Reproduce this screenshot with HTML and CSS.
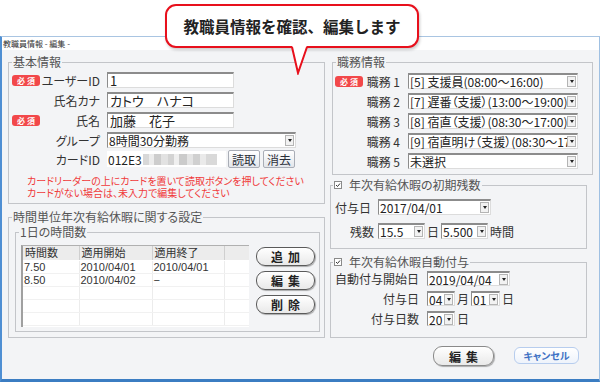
FILE: index.html
```html
<!DOCTYPE html>
<html lang="ja">
<head>
    <meta charset="UTF-8">
    <meta name="viewport" content="width=device-width, initial-scale=1.0">
    <title>教職員情報 - 編集 -</title>
    <link rel="stylesheet" href="styles.css">
</head>
<body>
    <!-- help balloon over the window -->
    <div class="callout">教職員情報を確認、編集します</div>
    <svg class="callout-tail" width="22" height="30" viewBox="0 0 22 30">
        <polygon points="3,0 18,0 9,28" fill="#fff"/>
        <polyline points="3,2 9,28 18,2" fill="none" stroke="#e8101c" stroke-width="2"/>
    </svg>

    <div class="top-space"></div>

    <div class="window">
        <div class="titlebar">教職員情報 - 編集 -</div>

        <div class="content">
            <div class="col-left">
                <fieldset class="group basic">
                    <legend>基本情報</legend>
                    <div class="row">
                        <span class="label"><span class="badge">必 須</span>ユーザーID</span>
                        <div class="textbox w127">1</div>
                    </div>
                    <div class="row">
                        <span class="label">氏名カナ</span>
                        <div class="textbox w127">カトウ　ハナコ</div>
                    </div>
                    <div class="row">
                        <span class="label"><span class="badge">必 須</span>氏名</span>
                        <div class="textbox w127">加藤　花子</div>
                    </div>
                    <div class="row">
                        <span class="label">グループ</span>
                        <div class="select w189"><span class="select-text">8時間30分勤務</span><span class="arrow"></span></div>
                    </div>
                    <div class="row card-row">
                        <span class="label">カードID</span>
                        <div class="card-field">012E3<span class="masked"></span></div>
                        <button class="small-btn">読取</button>
                        <button class="small-btn">消去</button>
                    </div>
                    <p class="note">カードリーダーの上にカードを置いて読取ボタンを押してください<br>カードがない場合は、未入力で編集してください</p>
                </fieldset>

                <fieldset class="group hourly">
                    <legend>時間単位年次有給休暇に関する設定</legend>
                    <fieldset class="group hours">
                        <legend>1日の時間数</legend>
                        <div class="hours-body">
                            <div class="list-box">
                                <table class="list">
                                    <colgroup>
                                        <col class="c1"><col class="c2"><col class="c3"><col>
                                    </colgroup>
                                    <thead>
                                        <tr><th>時間数</th><th>適用開始</th><th>適用終了</th><th></th></tr>
                                    </thead>
                                    <tbody>
                                        <tr><td>7.50</td><td>2010/04/01</td><td>2010/04/01</td><td></td></tr>
                                        <tr><td>8.50</td><td>2010/04/02</td><td>&minus;</td><td></td></tr>
                                        <tr><td></td><td></td><td></td><td></td></tr>
                                        <tr><td></td><td></td><td></td><td></td></tr>
                                        <tr><td></td><td></td><td></td><td></td></tr>
                                    </tbody>
                                </table>
                            </div>
                            <div class="list-buttons">
                                <button class="pill">追加</button>
                                <button class="pill">編集</button>
                                <button class="pill">削除</button>
                            </div>
                        </div>
                    </fieldset>
                </fieldset>
            </div>

            <div class="col-right">
                <fieldset class="group duty">
                    <legend>職務情報</legend>
                    <div class="duty-row">
                        <span class="label"><span class="badge">必 須</span>職務 1</span>
                        <div class="select w170"><span class="select-text">[5] 支援員(08:00～16:00)</span><span class="arrow"></span></div>
                    </div>
                    <div class="duty-row">
                        <span class="label">職務 2</span>
                        <div class="select w170"><span class="select-text">[7] 遅番（支援）(13:00～19:00)</span><span class="arrow"></span></div>
                    </div>
                    <div class="duty-row">
                        <span class="label">職務 3</span>
                        <div class="select w170"><span class="select-text">[8] 宿直（支援）(08:30～17:00)</span><span class="arrow"></span></div>
                    </div>
                    <div class="duty-row">
                        <span class="label">職務 4</span>
                        <div class="select w170"><span class="select-text">[9] 宿直明け（支援）(08:30～17</span><span class="arrow"></span></div>
                    </div>
                    <div class="duty-row">
                        <span class="label">職務 5</span>
                        <div class="select w170"><span class="select-text">未選択</span><span class="arrow"></span></div>
                    </div>
                </fieldset>

                <fieldset class="group initial">
                    <legend><span class="check"><svg width="8" height="8" viewBox="0 0 8 8"><rect x="0.5" y="0.5" width="7" height="7" fill="#fff" stroke="#8a8a8a"/><polyline points="2,4 3.5,5.5 6,2.5" fill="none" stroke="#333" stroke-width="1"/></svg></span>年次有給休暇の初期残数</legend>
                    <div class="init-row">
                        <span class="init-label">付与日</span>
                        <div class="select w113"><span class="select-text">2017/04/01</span><span class="arrow"></span></div>
                    </div>
                    <div class="init-row">
                        <span class="init-label rest">残数</span>
                        <div class="select w47"><span class="select-text">15.5</span><span class="arrow"></span></div>
                        <span class="unit">日</span>
                        <div class="select w47"><span class="select-text">5.500</span><span class="arrow"></span></div>
                        <span class="unit">時間</span>
                    </div>
                </fieldset>

                <fieldset class="group auto">
                    <legend><span class="check"><svg width="8" height="8" viewBox="0 0 8 8"><rect x="0.5" y="0.5" width="7" height="7" fill="#fff" stroke="#8a8a8a"/><polyline points="2,4 3.5,5.5 6,2.5" fill="none" stroke="#333" stroke-width="1"/></svg></span>年次有給休暇自動付与</legend>
                    <div class="auto-row">
                        <span class="auto-label">自動付与開始日</span>
                        <div class="select w83"><span class="select-text">2019/04/04</span><span class="arrow"></span></div>
                    </div>
                    <div class="auto-row">
                        <span class="auto-label">付与日</span>
                        <div class="select w28"><span class="select-text">04</span><span class="arrow"></span></div>
                        <span class="unit">月</span>
                        <div class="select w29"><span class="select-text">01</span><span class="arrow"></span></div>
                        <span class="unit">日</span>
                    </div>
                    <div class="auto-row">
                        <span class="auto-label">付与日数</span>
                        <div class="select w28"><span class="select-text">20</span><span class="arrow"></span></div>
                        <span class="unit">日</span>
                    </div>
                </fieldset>
            </div>
        </div>

        <div class="actions">
            <button class="pill save">編集</button>
            <button class="cancel">キャンセル</button>
        </div>
    </div>
</body>
</html>
```

FILE: styles.css
```css
* {
    margin: 0;
    padding: 0;
    box-sizing: border-box;
}

body {
    width: 601px;
    height: 382px;
    overflow: hidden;
    position: relative;
    background-color: #fff;
    font-family: "Noto Sans CJK JP", "Noto Sans", sans-serif;
    font-size: 12px;
    font-feature-settings: "palt";
    color: #333;
}

button {
    font-family: inherit;
    font-feature-settings: "palt";
    cursor: pointer;
}

/* balloon */
.callout {
    position: absolute;
    left: 165px;
    top: 4px;
    width: 254px;
    height: 44px;
    z-index: 2;
    display: flex;
    align-items: center;
    justify-content: center;
    background-color: #fff;
    border: 2px solid #e8101c;
    border-radius: 11px;
    box-shadow: 1px 2px 3px rgba(0, 0, 0, 0.2);
    font-size: 15.5px;
    font-weight: bold;
    font-feature-settings: normal;
    color: #222;
}

.callout-tail {
    position: absolute;
    left: 289px;
    top: 45px;
    z-index: 3;
}

.top-space {
    height: 36px;
}

/* window frame */
.window {
    width: 600px;
    height: 346px;
    background-color: #f3f4f6;
    border-top: 1px solid #a9c5e2;
    border-left: 2px solid #4f8fd3;
    border-right: 1px solid #9fc0e2;
    border-bottom: 3px solid #3b7dc2;
}

.titlebar {
    height: 13px;
    background-color: #fff;
    font-size: 8px;
    line-height: 13px;
    padding-left: 1px;
    color: #333;
}

.content {
    display: flex;
    gap: 5px;
    padding: 5px 0 0 6px;
}

.col-left {
    width: 317px;
    display: flex;
    flex-direction: column;
    gap: 6px;
}

.col-right {
    width: 263px;
    display: flex;
    flex-direction: column;
}

/* group boxes */
.group {
    min-width: 0;
    border: 1px solid #c3c5c9;
}

.group legend {
    font-size: 12px;
    line-height: 14px;
    padding: 0 1px;
    color: #555;
}

.basic {
    height: 149px;
    padding: 3px 3px 0 3px;
}

.hourly {
    height: 128px;
    padding: 1px 4px 0 6px;
}

.hourly > legend {
    margin-left: -3px;
}

.hours {
    height: 107px;
    padding: 6px 4px 0 5px;
}

.hours > legend {
    margin-left: -2px;
}

.duty {
    width: 261px;
    height: 120px;
    margin-left: 2px;
    padding: 4px 0 0 2px;
}

.duty > legend {
    margin-left: 1px;
}

.initial {
    width: 257px;
    height: 71px;
    margin-top: 3px;
    padding: 7px 0 0 4px;
}

.auto {
    width: 257px;
    height: 83px;
    margin-top: 6px;
    padding: 2px 0 0 4px;
}

.initial > legend,
.auto > legend {
    margin-left: -2px;
    display: flex;
    align-items: center;
}

.check {
    display: flex;
    margin-right: 7px;
}

/* basic info rows */
.row {
    display: flex;
    align-items: center;
    height: 16px;
    margin-bottom: 4px;
}

.label {
    width: 88px;
    margin-right: 7px;
    display: flex;
    align-items: center;
    justify-content: flex-end;
    white-space: nowrap;
    color: #333;
}

.badge {
    margin-right: auto;
    width: 28px;
    height: 11px;
    border-radius: 3px;
    background-color: #f2484a;
    color: #fff;
    font-size: 8px;
    font-weight: bold;
    line-height: 11px;
    text-align: center;
}

.textbox {
    height: 16px;
    padding-left: 2px;
    background-color: #fff;
    border-top: 2px solid #8c8c8c;
    border-left: 1px solid #8c8c8c;
    border-right: 1px solid #dcdcdc;
    border-bottom: 1px solid #dcdcdc;
    font-size: 13px;
    line-height: 13px;
    color: #222;
    white-space: nowrap;
}

.w127 { width: 127px; }
.w189 { width: 189px; }
.w170 { width: 170px; }
.w113 { width: 113px; }
.w83 { width: 83px; }
.w47 { width: 47px; }
.w29 { width: 29px; }
.w28 { width: 28px; }

.card-row {
    height: 18px;
    margin-top: -2px;
}

.card-field {
    width: 119px;
    height: 16px;
    margin-right: 2px;
    display: flex;
    align-items: center;
    padding-left: 1px;
    background-color: #fff;
    font-size: 12px;
    color: #222;
}

.masked {
    width: 74px;
    height: 11px;
    margin-left: 1px;
    background: linear-gradient(90deg, #d8d8d8 0 6px, #ececec 6px 11px, #cdcdcd 11px 18px, #e2e2e2 18px 25px,
        #d3d3d3 25px 31px, #efefef 31px 36px, #cbcbcb 36px 44px, #e4e4e4 44px 50px, #d0d0d0 50px 57px,
        #eaeaea 57px 63px, #d9d9d9 63px 74px);
}

.small-btn {
    width: 32px;
    height: 18px;
    margin-right: 3px;
    border: 1px solid #a9adb6;
    border-radius: 2px;
    background: linear-gradient(#ffffff, #e3e6eb);
    font-size: 12px;
    color: #2a2f3a;
}

.note {
    margin-top: 7px;
    padding-left: 15px;
    font-size: 10px;
    line-height: 12px;
    color: #f03a3a;
}

/* selects */
.select {
    height: 16px;
    display: flex;
    align-items: center;
    background-color: #fff;
    border-top: 2px solid #8c8c8c;
    border-left: 1px solid #8c8c8c;
    border-right: 1px solid #dcdcdc;
    border-bottom: 1px solid #dcdcdc;
}

.select-text {
    flex: 1;
    min-width: 0;
    padding-left: 1px;
    white-space: nowrap;
    line-height: 13px;
    color: #222;
}

.arrow {
    flex: none;
    width: 9px;
    height: 11px;
    margin-right: 1px;
    display: flex;
    align-items: center;
    justify-content: center;
    background-color: #f2f2f2;
    border: 1px solid #b4b4b4;
}

.arrow::after {
    content: "";
    border-left: 2px solid transparent;
    border-right: 2px solid transparent;
    border-top: 3px solid #222;
}

/* time list */
.hours-body {
    display: flex;
    align-items: flex-start;
}

.list-box {
    width: 228px;
    height: 82px;
    overflow: hidden;
    background-color: #fff;
    border-left: 2px solid #a0a0a0;
    border-top: 1px solid #b0b0b0;
}

.list {
    width: 240px;
    table-layout: fixed;
    border-collapse: collapse;
}

.list .c1 { width: 56px; }
.list .c2 { width: 73px; }
.list .c3 { width: 72px; }

.list th {
    height: 14px;
    padding-left: 2px;
    background-color: #ececec;
    border-right: 1px solid #cfcfcf;
    border-bottom: 1px solid #fff;
    font-size: 11px;
    font-weight: normal;
    text-align: left;
    line-height: 13px;
    color: #333;
}

.list td {
    height: 13px;
    padding-left: 1px;
    border-right: 1px solid #ececec;
    border-bottom: 1px solid #f1f1f1;
    font-family: "Liberation Sans", Arial, sans-serif;
    font-size: 11px;
    line-height: 12px;
    color: #333;
    white-space: nowrap;
}

.list-buttons {
    margin-left: 7px;
    padding-top: 2px;
    display: flex;
    flex-direction: column;
    gap: 5px;
}

.pill {
    width: 59px;
    height: 19px;
    border: 1px solid #5a5a5a;
    border-radius: 9px;
    background: linear-gradient(#ffffff, #e9e9e9);
    box-shadow: 1px 1px 1px rgba(0, 0, 0, 0.3);
    font-size: 12px;
    font-weight: bold;
    letter-spacing: 5px;
    text-indent: 5px;
    color: #222;
}

/* right side rows */
.duty-row {
    display: flex;
    align-items: center;
    height: 16px;
    margin-bottom: 4px;
}

.duty-row .label {
    width: 65px;
    margin-right: 8px;
}

.init-row {
    display: flex;
    align-items: center;
    height: 16px;
    margin-bottom: 8px;
}

.init-label {
    width: 43px;
    padding-right: 7px;
    text-align: right;
    white-space: nowrap;
}

.init-label.rest {
    padding-right: 4px;
}

.unit {
    margin: 0 2px 0 2px;
}

.init-row .unit:nth-of-type(1) {
    margin-right: 7px;
}

.auto-row {
    display: flex;
    align-items: center;
    height: 15px;
    margin-bottom: 5px;
}

.auto-row .select {
    height: 15px;
}

.auto-label {
    width: 92px;
    padding-right: 8px;
    text-align: right;
    white-space: nowrap;
}

/* footer buttons */
.actions {
    margin-top: 8px;
    padding-right: 20px;
    display: flex;
    justify-content: flex-end;
    align-items: flex-start;
    gap: 20px;
}

.save {
    width: 61px;
    height: 20px;
    border-color: #8a8a8a;
}

.cancel {
    width: 65px;
    height: 17px;
    margin-top: 1px;
    border: 1px solid #b7cdee;
    border-radius: 6px;
    background: linear-gradient(#ffffff, #eef3fb);
    font-size: 10px;
    font-weight: bold;
    color: #3f72c4;
}
```
